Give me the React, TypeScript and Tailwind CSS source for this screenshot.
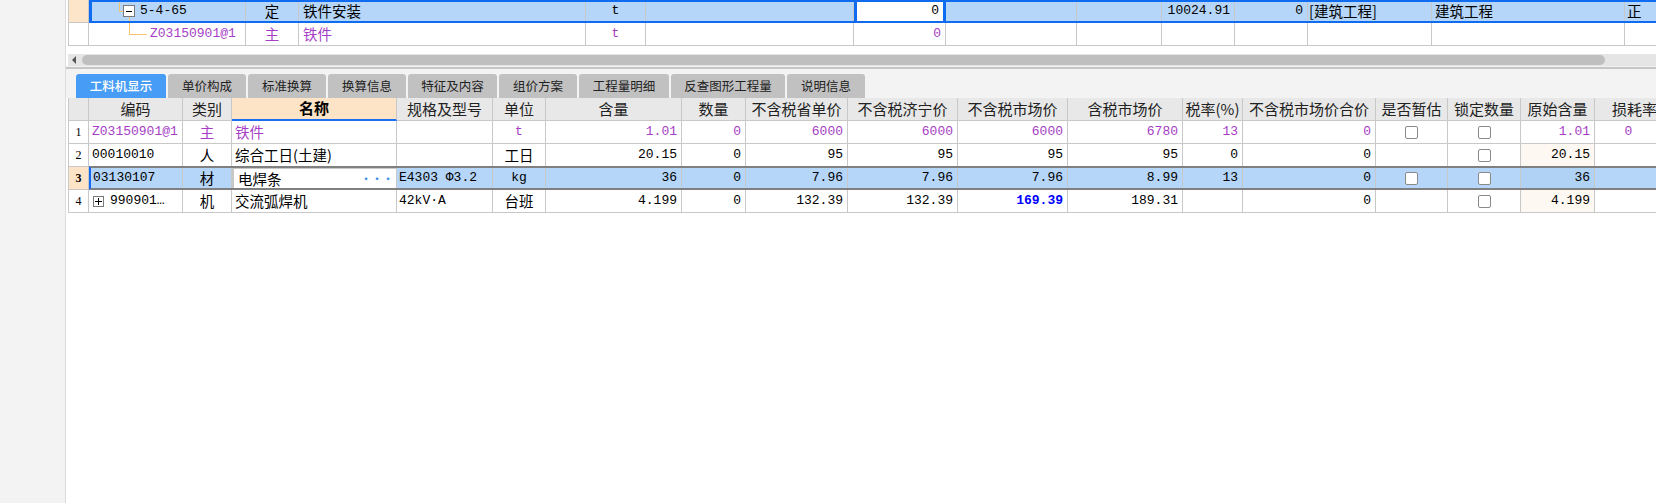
import React from "react";

const M = "font-['Liberation_Mono','Noto_Sans_CJK_SC',monospace] text-[13px]";
const C = "font-['Noto_Sans_CJK_SC',sans-serif] text-[14.5px]";
const P = "text-[#a53ec5]";
const RN = "font-['Liberation_Serif',serif] text-[12px]";

const TOP =
  "grid w-max text-black grid-cols-[21px_157px_53px_287px_60px_208px_92px_131px_85px_73px_73px_124px_193px_120px]";
const BOT =
  "grid w-max text-black grid-cols-[21px_94px_49px_165px_96px_53px_136px_64px_102px_110px_110px_115px_60px_133px_72px_73px_74px_80px]";

function Cell({ className = "", children }: { className?: string; children?: React.ReactNode }) {
  return (
    <div
      className={`h-[23px] border-r border-b border-[#c8c8c8] flex items-center overflow-hidden whitespace-nowrap ${className}`}
    >
      {children}
    </div>
  );
}

function Check() {
  return <span className="block w-[13px] h-[13px] border border-[#8a8a8a] rounded-[2px] bg-white" />;
}

const tabs: { label: string; w: string; active?: boolean }[] = [
  { label: "工料机显示", w: "w-[90px]", active: true },
  { label: "单价构成", w: "w-[78px]" },
  { label: "标准换算", w: "w-[78px]" },
  { label: "换算信息", w: "w-[78px]" },
  { label: "特征及内容", w: "w-[89px]" },
  { label: "组价方案", w: "w-[78px]" },
  { label: "工程量明细", w: "w-[90px]" },
  { label: "反查图形工程量", w: "w-[114px]" },
  { label: "说明信息", w: "w-[78px]" },
];

const headers = [
  "",
  "编码",
  "类别",
  "名称",
  "规格及型号",
  "单位",
  "含量",
  "数量",
  "不含税省单价",
  "不含税济宁价",
  "不含税市场价",
  "含税市场价",
  "税率(%)",
  "不含税市场价合价",
  "是否暂估",
  "锁定数量",
  "原始含量",
  "损耗率",
];

export default function App() {
  const R = `justify-end pr-[4px] ${M}`;
  return (
    <div className="w-[1656px] h-[503px] flex bg-white overflow-hidden">
      <div className="w-[66px] shrink-0 bg-[#f3f3f3] border-r border-[#dcdcdc]" />
      <div className="flex-1 min-w-0 flex flex-col overflow-hidden bg-white">
        {/* top table */}
        <div className="pl-[2px]">
          <div className={`relative bg-[#b5d6f8] ${TOP}`}>
            <Cell className="bg-[#fde5c9] border-l" />
            <Cell className="relative">
              <span className="absolute left-[30px] top-0 h-[12px] w-px bg-[#f5c46e]" />
              <span className="absolute left-[30px] top-[11px] w-[4px] h-px bg-[#f5c46e]" />
              <span className="absolute left-[40px] top-[17px] h-[6px] w-px bg-[#f5c46e]" />
              <span className="absolute left-[34px] top-[5px] w-[12px] h-[12px] border border-[#7a7a7a] bg-white flex items-center justify-center">
                <span className="block w-[6px] h-px bg-black" />
              </span>
              <span className={`pl-[51px] ${M}`}>5-4-65</span>
            </Cell>
            <Cell className={`justify-center ${C}`}>定</Cell>
            <Cell className={`pl-[4px] ${C}`}>铁件安装</Cell>
            <Cell className={`justify-center ${M}`}>t</Cell>
            <Cell />
            <Cell className={`${R} bg-white border-l-[3px] border-l-[#0f6bf0] border-r-[3px] border-r-[#0f6bf0]`}>0</Cell>
            <Cell />
            <Cell />
            <Cell className={R}>10024.91</Cell>
            <Cell className={R}>0</Cell>
            <Cell className={`pl-[1px] ${C}`}>[建筑工程]</Cell>
            <Cell className={`pl-[3px] ${C}`}>建筑工程</Cell>
            <Cell className={`pl-[2px] ${C}`}>正</Cell>
            <div className="pointer-events-none absolute left-[21px] top-0 right-0 h-[23px] border-t-2 border-b-2 border-l-[3px] border-[#0f6bf0]" />
          </div>
          <div className={`bg-white ${TOP}`}>
            <Cell className="border-l" />
            <Cell className="relative">
              <span className="absolute left-[40px] top-0 h-[11px] w-px bg-[#f5c46e]" />
              <span className="absolute left-[40px] top-[11px] w-[18px] h-px bg-[#f5c46e]" />
              <span className={`pl-[61px] ${M} ${P}`}>Z03150901@1</span>
            </Cell>
            <Cell className={`justify-center ${C} ${P}`}>主</Cell>
            <Cell className={`pl-[4px] ${C} ${P}`}>铁件</Cell>
            <Cell className={`justify-center ${M} ${P}`}>t</Cell>
            <Cell />
            <Cell className={`${R} ${P}`}>0</Cell>
            <Cell />
            <Cell />
            <Cell />
            <Cell />
            <Cell />
            <Cell />
            <Cell />
          </div>
        </div>

        <div className="h-[8px] shrink-0" />

        {/* scrollbar */}
        <div className="ml-[2px] h-[12px] shrink-0 bg-[#e5e5e5] flex items-center">
          <span className="ml-[4px] w-0 h-0 border-y-[4px] border-y-transparent border-r-[4px] border-r-[#555]" />
          <span className="ml-[6px] w-[1523px] shrink-0 h-[10px] rounded-full bg-[#bfbfbf]" />
        </div>
        <div className="h-px shrink-0 bg-[#f2f2f2]" />
        <div className="h-[2px] shrink-0 bg-[#c6c6c6]" />

        {/* tabs */}
        <div className="h-[29px] shrink-0 bg-[#f3f3f3] pl-[10px] flex items-end gap-[2px]">
          {tabs.map((t) => (
            <div
              key={t.label}
              className={`${t.w} h-[24px] rounded-t-[3px] flex items-center justify-center font-['Noto_Sans_CJK_SC',sans-serif] text-[12.5px] ${
                t.active ? "bg-[#479cf5] text-white font-medium" : "bg-[#c1c1c1] text-[#222]"
              }`}
            >
              {t.label}
            </div>
          ))}
        </div>

        {/* bottom table */}
        <div className="pl-[2px]">
          <div className={`bg-[#e8e8e8] ${BOT}`}>
            {headers.map((h, i) =>
              h === "名称" ? (
                <Cell
                  key={i}
                  className={`justify-center bg-[#fde4c6] border-b-2 border-b-[#1b6ff0] font-bold ${C} text-[15px]`}
                >
                  {h}
                </Cell>
              ) : (
                <Cell key={i} className={`justify-center ${C} text-[15px] text-[#222] ${i === 0 ? "border-l" : ""}`}>
                  {h}
                </Cell>
              )
            )}
          </div>

          {/* row 1 */}
          <div className={`bg-white ${BOT}`}>
            <Cell className={`justify-center border-l ${RN}`}>1</Cell>
            <Cell className={`pl-[3px] ${M} ${P}`}>Z03150901@1</Cell>
            <Cell className={`justify-center ${C} ${P}`}>主</Cell>
            <Cell className={`pl-[3px] ${C} ${P}`}>铁件</Cell>
            <Cell />
            <Cell className={`justify-center ${M} ${P}`}>t</Cell>
            <Cell className={`${R} ${P}`}>1.01</Cell>
            <Cell className={`${R} ${P}`}>0</Cell>
            <Cell className={`${R} ${P}`}>6000</Cell>
            <Cell className={`${R} ${P}`}>6000</Cell>
            <Cell className={`${R} ${P}`}>6000</Cell>
            <Cell className={`${R} ${P}`}>6780</Cell>
            <Cell className={`${R} ${P}`}>13</Cell>
            <Cell className={`${R} ${P}`}>0</Cell>
            <Cell className="justify-center"><Check /></Cell>
            <Cell className="justify-center"><Check /></Cell>
            <Cell className={`${R} ${P}`}>1.01</Cell>
            <Cell className={`justify-center pr-[12px] ${M} ${P}`}>0</Cell>
          </div>

          {/* row 2 */}
          <div className={`bg-white ${BOT}`}>
            <Cell className={`justify-center border-l ${RN}`}>2</Cell>
            <Cell className={`pl-[3px] ${M}`}>00010010</Cell>
            <Cell className={`justify-center ${C}`}>人</Cell>
            <Cell className={`pl-[3px] ${C}`}>综合工日(土建)</Cell>
            <Cell />
            <Cell className={`justify-center ${C}`}>工日</Cell>
            <Cell className={R}>20.15</Cell>
            <Cell className={R}>0</Cell>
            <Cell className={R}>95</Cell>
            <Cell className={R}>95</Cell>
            <Cell className={R}>95</Cell>
            <Cell className={R}>95</Cell>
            <Cell className={R}>0</Cell>
            <Cell className={R}>0</Cell>
            <Cell />
            <Cell className="justify-center"><Check /></Cell>
            <Cell className={`${R} bg-[#fdf8f1]`}>20.15</Cell>
            <Cell />
          </div>

          {/* row 3 selected */}
          <div className={`relative bg-[#b5d6f8] ${BOT}`}>
            <Cell className={`justify-center border-l bg-[#fde4c6] font-bold ${RN}`}>3</Cell>
            <Cell className={`pl-[4px] ${M}`}>03130107</Cell>
            <Cell className={`justify-center ${C}`}>材</Cell>
            <Cell className={`pl-[4px] pr-[3px] justify-between bg-white border-2 border-[#808080] ${C}`}>
              <span>电焊条</span>
              <span className="text-[#3b8fe6] text-[12px] tracking-[-1px]">···</span>
            </Cell>
            <Cell className={`pl-[2px] ${M}`}>E4303 Φ3.2</Cell>
            <Cell className={`justify-center ${M}`}>kg</Cell>
            <Cell className={R}>36</Cell>
            <Cell className={R}>0</Cell>
            <Cell className={R}>7.96</Cell>
            <Cell className={R}>7.96</Cell>
            <Cell className={R}>7.96</Cell>
            <Cell className={R}>8.99</Cell>
            <Cell className={R}>13</Cell>
            <Cell className={R}>0</Cell>
            <Cell className="justify-center"><Check /></Cell>
            <Cell className="justify-center"><Check /></Cell>
            <Cell className={`${R} bg-[#b0d2f4]`}>36</Cell>
            <Cell />
            <div className="pointer-events-none absolute left-[21px] top-[-1px] right-0 h-[24px] border-t-2 border-b-2 border-[#808080] border-l-2 border-l-[#1468f0]" />
          </div>

          {/* row 4 */}
          <div className={`bg-white ${BOT}`}>
            <Cell className={`justify-center border-l ${RN}`}>4</Cell>
            <Cell className={`pl-[4px] ${M}`}>
              <span className="relative w-[11px] h-[11px] border border-[#7a7a7a] bg-white mr-[6px] flex items-center justify-center">
                <span className="absolute w-[7px] h-px bg-black" />
                <span className="absolute h-[7px] w-px bg-black" />
              </span>
              990901…
            </Cell>
            <Cell className={`justify-center ${C}`}>机</Cell>
            <Cell className={`pl-[3px] ${C}`}>交流弧焊机</Cell>
            <Cell className={`pl-[2px] ${M}`}>42kV·A</Cell>
            <Cell className={`justify-center ${C}`}>台班</Cell>
            <Cell className={R}>4.199</Cell>
            <Cell className={R}>0</Cell>
            <Cell className={R}>132.39</Cell>
            <Cell className={R}>132.39</Cell>
            <Cell className={`${R} font-bold text-[#0000ff]`}>169.39</Cell>
            <Cell className={R}>189.31</Cell>
            <Cell />
            <Cell className={R}>0</Cell>
            <Cell />
            <Cell className="justify-center"><Check /></Cell>
            <Cell className={`${R} bg-[#fdf8f1]`}>4.199</Cell>
            <Cell />
          </div>
        </div>
      </div>
    </div>
  );
}
